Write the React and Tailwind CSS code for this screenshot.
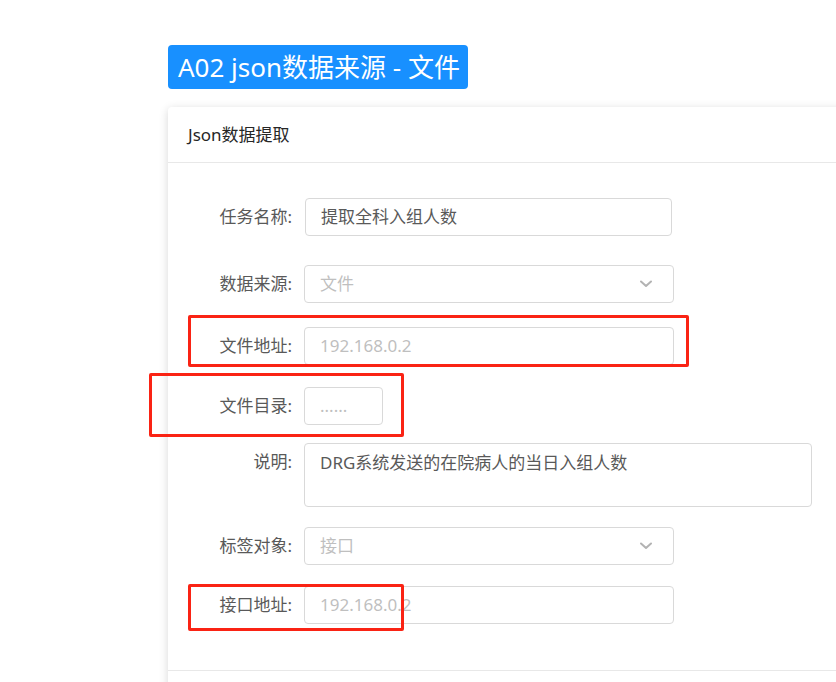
import React from "react";

const Label = ({ children, top }) => (
    <div
        className={`w-[125px] shrink-0 pr-[1px] text-right text-[17px] leading-[22px] text-[#595959] ${top ? "pt-[8px]" : ""}`}
    >
        {children}
    </div>
);

const Field = ({ value, placeholder, width = "w-[370px]" }) => (
    <div
        className={`${width} h-[38px] flex items-center px-[15px] border border-[#d9d9d9] rounded-[4px] text-[17px] ${value ? "text-[#595959]" : "text-[#bfbfbf]"}`}
    >
        {value || placeholder}
    </div>
);

const Select = ({ placeholder }) => (
    <div className="w-[370px] h-[38px] flex items-center justify-between pl-[15px] pr-[21px] border border-[#d9d9d9] rounded-[4px] text-[17px] text-[#bfbfbf]">
        <span>{placeholder}</span>
        <svg width="12" height="8" viewBox="0 0 12 8" fill="none">
            <polyline points="1,1.5 6,6 11,1.5" stroke="#b3b3b3" strokeWidth="2" strokeLinecap="round" strokeLinejoin="round" />
        </svg>
    </div>
);

const App = () => {
    return (
        <div className="relative w-[836px] h-[682px] overflow-hidden bg-white font-['Noto_Sans','Noto_Sans_CJK_SC',sans-serif]">
            {/* 标题 */}
            <div className="pt-[45px] pl-[168px]">
                <div className="w-[300px] h-[44px] flex items-center pl-[10px] bg-[#1890ff] rounded-[4px] text-white text-[26px] leading-none">
                    A02 json数据来源 - 文件
                </div>
            </div>

            {/* 表单卡片 */}
            <div className="mt-[18px] ml-[168px] w-[720px] bg-white rounded-[4px] shadow-[0_2px_10px_rgba(0,0,0,0.16)]">
                <div className="h-[56px] flex items-center px-[20px] border-b border-[#e8e8e8] text-[17px] text-[#262626]">
                    Json数据提取
                </div>

                <div className="pt-[35px] pb-[46px] border-b border-[#e8e8e8]">
                    <div className="flex items-center gap-[11px]">
                        <Label>任务名称:</Label>
                        <div className="pl-[1px]">
                            <Field value="提取全科入组人数" width="w-[367px]" />
                        </div>
                    </div>
                    <div className="flex items-center gap-[11px] mt-[29px]">
                        <Label>数据来源:</Label>
                        <Select placeholder="文件" />
                    </div>
                    <div className="flex items-center gap-[11px] mt-[24px]">
                        <Label>文件地址:</Label>
                        <Field placeholder="192.168.0.2" />
                    </div>
                    <div className="flex items-center gap-[11px] mt-[22px]">
                        <Label>文件目录:</Label>
                        <Field placeholder="......" width="w-[79px]" />
                    </div>
                    <div className="flex items-start gap-[11px] mt-[18px]">
                        <Label top>说明:</Label>
                        <div className="w-[508px] h-[64px] px-[15px] pt-[8px] border border-[#d9d9d9] rounded-[4px] text-[17px] leading-[22px] text-[#595959]">
                            DRG系统发送的在院病人的当日入组人数
                        </div>
                    </div>
                    <div className="flex items-center gap-[11px] mt-[20px]">
                        <Label>标签对象:</Label>
                        <Select placeholder="接口" />
                    </div>
                    <div className="flex items-center gap-[11px] mt-[21px]">
                        <Label>接口地址:</Label>
                        <Field placeholder="192.168.0.2" />
                    </div>
                </div>
                <div className="h-[40px]"></div>
            </div>

            {/* 标注框 */}
            <div className="absolute left-[188px] top-[315px] w-[501px] h-[52px] border-[3px] border-[#fa2314] rounded-[2px]"></div>
            <div className="absolute left-[149px] top-[373px] w-[255px] h-[64px] border-[3px] border-[#fa2314] rounded-[2px]"></div>
            <div className="absolute left-[188px] top-[584px] w-[216px] h-[47px] border-[3px] border-[#fa2314] rounded-[2px]"></div>
        </div>
    );
};

export default App;
